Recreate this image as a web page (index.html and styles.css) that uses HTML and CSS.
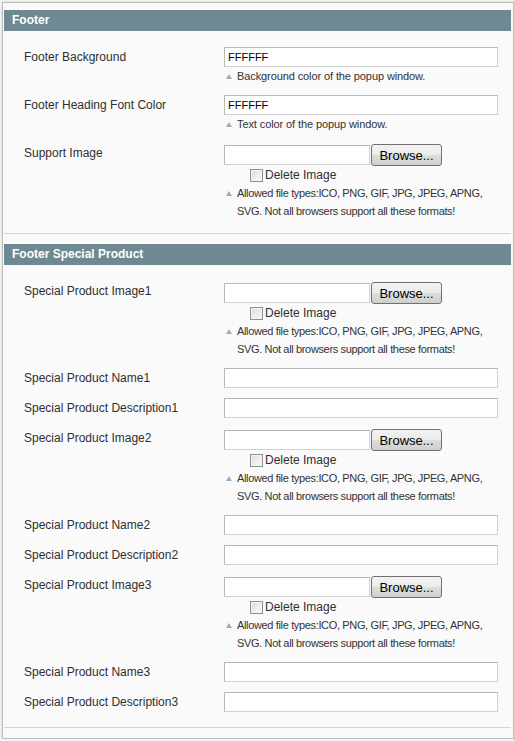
FILE: index.html
```html
<!DOCTYPE html>
<html>
<head>
<meta charset="utf-8">
<title>Footer settings</title>
<link rel="stylesheet" href="styles.css">
</head>
<body>
<div class="frame">
  <section class="group">
    <h3 class="group-head">Footer</h3>
    <div class="group-body">
      <div class="row">
        <div class="label">Footer Background</div>
        <div class="value">
          <input class="text" type="text" value="FFFFFF">
          <p class="note">Background color of the popup window.</p>
        </div>
      </div>
      <div class="row">
        <div class="label">Footer Heading Font Color</div>
        <div class="value">
          <input class="text" type="text" value="FFFFFF">
          <p class="note">Text color of the popup window.</p>
        </div>
      </div>
      <div class="row">
        <div class="label">Support Image</div>
        <div class="value">
          <div class="file"><input class="text file-name" type="text"><button class="browse" type="button">Browse...</button></div>
          <label class="delete"><input class="check" type="checkbox"><span>Delete Image</span></label>
          <p class="note note-types">Allowed file types:ICO, PNG, GIF, JPG, JPEG, APNG,<br>SVG. Not all browsers support all these formats!</p>
        </div>
      </div>
    </div>
  </section>
  <section class="group">
    <h3 class="group-head">Footer Special Product</h3>
    <div class="group-body">
      <div class="row">
        <div class="label">Special Product Image1</div>
        <div class="value">
          <div class="file"><input class="text file-name" type="text"><button class="browse" type="button">Browse...</button></div>
          <label class="delete"><input class="check" type="checkbox"><span>Delete Image</span></label>
          <p class="note note-types">Allowed file types:ICO, PNG, GIF, JPG, JPEG, APNG,<br>SVG. Not all browsers support all these formats!</p>
        </div>
      </div>
      <div class="row">
        <div class="label">Special Product Name1</div>
        <div class="value"><input class="text" type="text"></div>
      </div>
      <div class="row">
        <div class="label">Special Product Description1</div>
        <div class="value"><input class="text" type="text"></div>
      </div>
      <div class="row">
        <div class="label">Special Product Image2</div>
        <div class="value">
          <div class="file"><input class="text file-name" type="text"><button class="browse" type="button">Browse...</button></div>
          <label class="delete"><input class="check" type="checkbox"><span>Delete Image</span></label>
          <p class="note note-types">Allowed file types:ICO, PNG, GIF, JPG, JPEG, APNG,<br>SVG. Not all browsers support all these formats!</p>
        </div>
      </div>
      <div class="row">
        <div class="label">Special Product Name2</div>
        <div class="value"><input class="text" type="text"></div>
      </div>
      <div class="row">
        <div class="label">Special Product Description2</div>
        <div class="value"><input class="text" type="text"></div>
      </div>
      <div class="row">
        <div class="label">Special Product Image3</div>
        <div class="value">
          <div class="file"><input class="text file-name" type="text"><button class="browse" type="button">Browse...</button></div>
          <label class="delete"><input class="check" type="checkbox"><span>Delete Image</span></label>
          <p class="note note-types">Allowed file types:ICO, PNG, GIF, JPG, JPEG, APNG,<br>SVG. Not all browsers support all these formats!</p>
        </div>
      </div>
      <div class="row">
        <div class="label">Special Product Name3</div>
        <div class="value"><input class="text" type="text"></div>
      </div>
      <div class="row">
        <div class="label">Special Product Description3</div>
        <div class="value"><input class="text" type="text"></div>
      </div>
    </div>
  </section>
</div>
</body>
</html>
```

FILE: styles.css
```css
html, body {
  margin: 0;
  padding: 0;
  background: #f4f4f4;
}
body {
  font-family: "Liberation Sans", Arial, sans-serif;
  color: #2f2f2f;
}
.frame {
  box-sizing: border-box;
  width: 512px;
  margin: 2px 0 0 2px;
  padding: 7px 2px 0 1px;
  background: #fafafa;
  border: 1px solid #bdbdbd;
  box-shadow: 0 0 2px rgba(0,0,0,0.15);
}
.group {
  margin-bottom: 10px;
}
.group-head {
  margin: 0;
  height: 21px;
  line-height: 21px;
  padding-left: 8px;
  background: #6f8992;
  color: #fff;
  font-size: 12px;
  font-weight: bold;
}
.group-body {
  padding: 11px 0 8px 0;
  background: #fafafa;
  border-bottom: 1px solid #d6d6d6;
}
.group + .group .group-body {
  padding-bottom: 10px;
}
.row {
  display: flex;
  padding: 5px 0 5px 20px;
}
.label {
  width: 200px;
  flex: none;
  font-size: 12px;
  line-height: 20px;
  color: #2f2f2f;
}
.value {
  width: 274px;
  flex: none;
}
.text {
  display: block;
  box-sizing: border-box;
  width: 274px;
  height: 20px;
  margin: 0;
  padding: 0 3px;
  border: 1px solid;
  border-color: #b7b7b7 #d0d0d0 #d0d0d0 #b7b7b7;
  background: #fff;
  font-family: "Liberation Sans", Arial, sans-serif;
  font-size: 11px;
  color: #000;
  outline: none;
}
.note {
  margin: 0;
  padding-left: 13px;
  font-size: 11px;
  line-height: 18px;
  color: #333;
  white-space: nowrap;
  letter-spacing: -0.1px;
}
.note-types {
  letter-spacing: -0.35px;
}
.note::before {
  content: "";
  display: inline-block;
  width: 0;
  height: 0;
  margin-left: -11px;
  margin-right: 5px;
  vertical-align: 1px;
  border-left: 3px solid transparent;
  border-right: 3px solid transparent;
  border-bottom: 5px solid #a3acb0;
}
.file {
  display: flex;
  align-items: center;
  height: 22px;
  margin-top: 1px;
}
.file-name {
  width: 146px;
}
.browse {
  box-sizing: border-box;
  width: 71px;
  height: 22px;
  margin: 0 0 0 1px;
  padding: 0;
  border: 1px solid #707070;
  border-radius: 3px;
  background: linear-gradient(#f2f2f2, #ebebeb 50%, #dddddd 50%, #cfcfcf);
  font-family: "Liberation Sans", Arial, sans-serif;
  font-size: 13px;
  color: #000;
}
.delete {
  display: flex;
  align-items: center;
  height: 18px;
  padding-left: 26px;
  font-size: 12px;
  color: #2f2f2f;
}
.check {
  appearance: none;
  -webkit-appearance: none;
  box-sizing: border-box;
  width: 13px;
  height: 13px;
  margin: 0 2px 0 0;
  border: 1px solid #8e8f8f;
  background: linear-gradient(135deg, #dcdcdc, #fbfbfb);
  box-shadow: inset 0 0 0 1px #f4f4f4;
}
```
